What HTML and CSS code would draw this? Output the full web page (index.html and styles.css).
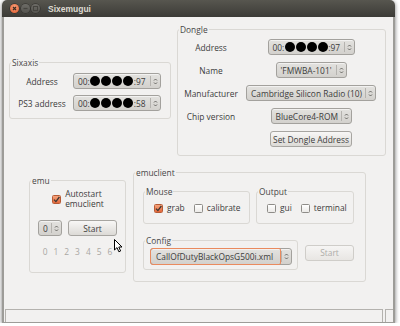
FILE: index.html
```html
<!DOCTYPE html>
<html lang="en">
<head>
    <meta charset="UTF-8">
    <title>Sixemugui</title>
    <link rel="stylesheet" href="styles.css">
</head>
<body>
    <div class="window">
        <div class="titlebar">
            <div class="wm-buttons">
                <span class="wm-btn close">
                    <svg width="9" height="9" viewBox="0 0 9 9"><path d="M3 3 L6 6 M6 3 L3 6" stroke="#3c2b22" stroke-width="1.2"/></svg>
                </span>
                <span class="wm-btn">
                    <svg width="9" height="9" viewBox="0 0 9 9"><path d="M2.5 4.5 H6.5" stroke="#45443f" stroke-width="1.2"/></svg>
                </span>
                <span class="wm-btn">
                    <svg width="9" height="9" viewBox="0 0 9 9"><rect x="2.5" y="2.5" width="4" height="4" fill="none" stroke="#45443f" stroke-width="1"/></svg>
                </span>
            </div>
            <span class="title">Sixemugui</span>
        </div>

        <div class="client">
            <div class="top-row">
                <fieldset class="group sixaxis">
                    <legend>Sixaxis</legend>
                    <div class="form-grid">
                        <label>Address</label>
                        <div class="spin w88">
                            <span class="value">00:<i class="blot"></i><i class="blot"></i><i class="blot"></i><i class="blot"></i>:97</span>
                            <span class="arrows"><svg width="5" height="9" viewBox="0 0 5 9"><path d="M1 3.5 L2.5 2 L4 3.5 M1 5.5 L2.5 7 L4 5.5" fill="none" stroke="#5a5955" stroke-width="0.9"/></svg></span>
                        </div>
                        <label>PS3 address</label>
                        <div class="spin w88">
                            <span class="value">00:<i class="blot"></i><i class="blot"></i><i class="blot"></i><i class="blot"></i>:58</span>
                            <span class="arrows"><svg width="5" height="9" viewBox="0 0 5 9"><path d="M1 3.5 L2.5 2 L4 3.5 M1 5.5 L2.5 7 L4 5.5" fill="none" stroke="#5a5955" stroke-width="0.9"/></svg></span>
                        </div>
                    </div>
                </fieldset>

                <fieldset class="group dongle">
                    <legend>Dongle</legend>
                    <div class="form-grid">
                        <label>Address</label>
                        <div class="spin w87">
                            <span class="value">00:<i class="blot"></i><i class="blot"></i><i class="blot"></i><i class="blot"></i>:97</span>
                            <span class="arrows"><svg width="5" height="9" viewBox="0 0 5 9"><path d="M1 3.5 L2.5 2 L4 3.5 M1 5.5 L2.5 7 L4 5.5" fill="none" stroke="#5a5955" stroke-width="0.9"/></svg></span>
                        </div>
                        <label>Name</label>
                        <div class="spin w71">
                            <span class="value">'FMWBA-101'</span>
                            <span class="arrows"><svg width="5" height="9" viewBox="0 0 5 9"><path d="M1 3.5 L2.5 2 L4 3.5 M1 5.5 L2.5 7 L4 5.5" fill="none" stroke="#5a5955" stroke-width="0.9"/></svg></span>
                        </div>
                        <label>Manufacturer</label>
                        <div class="spin w130">
                            <span class="value">Cambridge Silicon Radio (10)</span>
                            <span class="arrows"><svg width="5" height="9" viewBox="0 0 5 9"><path d="M1 3.5 L2.5 2 L4 3.5 M1 5.5 L2.5 7 L4 5.5" fill="none" stroke="#5a5955" stroke-width="0.9"/></svg></span>
                        </div>
                        <label>Chip version</label>
                        <div class="spin w81">
                            <span class="value">BlueCore4-ROM</span>
                            <span class="arrows"><svg width="5" height="9" viewBox="0 0 5 9"><path d="M1 3.5 L2.5 2 L4 3.5 M1 5.5 L2.5 7 L4 5.5" fill="none" stroke="#5a5955" stroke-width="0.9"/></svg></span>
                        </div>
                        <span></span>
                        <button class="btn w82">Set Dongle Address</button>
                    </div>
                </fieldset>
            </div>

            <div class="bottom-row">
                <fieldset class="group emu">
                    <legend>emu</legend>
                    <div class="emu-body">
                        <div class="check-item">
                            <span class="checkbox checked"><svg width="9" height="9" viewBox="0 0 9 9"><path d="M2 4.6 L3.9 6.6 L7.4 2" fill="none" stroke="#3a3633" stroke-width="1.3"/></svg></span>
                            <span class="two-line">Autostart<br>emuclient</span>
                        </div>
                        <div class="emu-controls">
                            <div class="spin w24">
                                <span class="value">0</span>
                                <span class="arrows"><svg width="5" height="9" viewBox="0 0 5 9"><path d="M1 3.5 L2.5 2 L4 3.5 M1 5.5 L2.5 7 L4 5.5" fill="none" stroke="#5a5955" stroke-width="0.9"/></svg></span>
                            </div>
                            <button class="btn w49">Start</button>
                        </div>
                        <div class="slots">
                            <span>0</span><span>1</span><span>2</span><span>3</span><span>4</span><span>5</span><span>6</span>
                        </div>
                    </div>
                    <svg class="cursor" width="9" height="14" viewBox="0 0 9 14">
                        <path d="M0.5 0.5 L0.5 11 L3 8.6 L4.9 12.8 L6.6 12 L4.8 8 L8 8 Z" fill="#fff" stroke="#000" stroke-width="1"/>
                    </svg>
                </fieldset>

                <fieldset class="group emuclient">
                    <legend>emuclient</legend>
                    <div class="emuclient-body">
                        <div class="io-row">
                            <fieldset class="group mouse">
                                <legend>Mouse</legend>
                                <div class="checks">
                                    <div class="check-item">
                                        <span class="checkbox checked"><svg width="9" height="9" viewBox="0 0 9 9"><path d="M2 4.6 L3.9 6.6 L7.4 2" fill="none" stroke="#3a3633" stroke-width="1.3"/></svg></span>
                                        <span>grab</span>
                                    </div>
                                    <div class="check-item">
                                        <span class="checkbox"></span>
                                        <span>calibrate</span>
                                    </div>
                                </div>
                            </fieldset>
                            <fieldset class="group output">
                                <legend>Output</legend>
                                <div class="checks">
                                    <div class="check-item">
                                        <span class="checkbox"></span>
                                        <span>gui</span>
                                    </div>
                                    <div class="check-item">
                                        <span class="checkbox"></span>
                                        <span>terminal</span>
                                    </div>
                                </div>
                            </fieldset>
                        </div>
                        <div class="config-row">
                            <fieldset class="group config">
                                <legend>Config</legend>
                                <div class="config-body">
                                    <div class="spin focus">
                                        <span class="value">CallOfDutyBlackOpsG500i.xml</span>
                                        <span class="arrows"><svg width="5" height="9" viewBox="0 0 5 9"><path d="M1 3.5 L2.5 2 L4 3.5 M1 5.5 L2.5 7 L4 5.5" fill="none" stroke="#5a5955" stroke-width="0.9"/></svg></span>
                                    </div>
                                </div>
                            </fieldset>
                            <button class="btn w49" disabled>Start</button>
                        </div>
                    </div>
                </fieldset>
            </div>

            <div class="statusbar">
                <div class="status-msg"></div>
                <div class="grip"></div>
            </div>
        </div>
    </div>
</body>
</html>
```

FILE: styles.css
```css
* {
    box-sizing: border-box;
}
body {
    margin: 0;
    background-color: #fff;
    font-family: "Open Sans", "Liberation Sans", Arial, sans-serif;
    font-size: 8.4px;
    color: #3c3c3c;
}
.window {
    width: 393px;
    margin-left: 2px;
    border-radius: 5px 5px 0 0;
    box-shadow: 0 1px 4px rgba(0, 0, 0, 0.55);
}
.titlebar {
    height: 17px;
    display: flex;
    align-items: center;
    padding-left: 8px;
    background: linear-gradient(#57564f, #3c3b37);
    border-radius: 5px 5px 0 0;
}
.wm-buttons {
    display: flex;
    gap: 1.5px;
}
.wm-btn {
    width: 9px;
    height: 9px;
    border-radius: 50%;
    display: flex;
    background: linear-gradient(#6d6c67, #55544f);
    box-shadow: 0 0 0 0.5px #2e2d2a;
}
.wm-btn.close {
    background: radial-gradient(circle at 50% 35%, #f8a07a, #e25a2c);
}
.title {
    margin-left: 8px;
    font-family: "Liberation Sans", Arial, sans-serif;
    font-size: 8.5px;
    font-weight: bold;
    color: #dfdbd2;
}
.client {
    height: 306px;
    display: flex;
    flex-direction: column;
    background-color: #f2f1f0;
    border: solid #9d9c98;
    border-width: 0 2px 1px 2px;
}

/* group boxes */
.group {
    margin: 0;
    padding: 0;
    min-width: 0;
    border: 1px solid #dad8d4;
    border-radius: 3px;
}
.group legend {
    margin-left: 1px;
    padding: 0 1px;
    line-height: 11px;
    color: #474747;
}
.top-row {
    display: flex;
    align-items: flex-start;
    gap: 6px;
    margin-top: 7px;
    padding-left: 5px;
}
.sixaxis {
    width: 162px;
    margin-top: 33px;
}
.dongle {
    width: 209px;
}
.form-grid {
    display: grid;
    grid-auto-rows: 16px;
    align-items: center;
    justify-items: center;
}
.sixaxis .form-grid {
    grid-template-columns: 50px 88px;
    column-gap: 6px;
    row-gap: 6px;
    padding: 5px 0 7px 7px;
}
.dongle .form-grid {
    grid-template-columns: 62px 130px;
    column-gap: 4px;
    row-gap: 7px;
    padding: 4px 0 8px 2px;
}
.form-grid label {
    white-space: nowrap;
}

/* spin boxes and combos */
.spin {
    height: 16px;
    display: flex;
    align-items: stretch;
    border: 1px solid #a3a19d;
    border-radius: 3px;
    background: linear-gradient(#e3e2df, #d3d1cd);
    box-shadow: inset 0 1px 0 rgba(255, 255, 255, 0.55);
    white-space: nowrap;
}
.spin .value {
    flex: 1;
    display: flex;
    align-items: center;
    padding-left: 4px;
    overflow: hidden;
}
.spin .arrows {
    width: 10px;
    flex: none;
    display: flex;
    align-items: center;
    justify-content: center;
    border-left: 1px solid #b5b3af;
    margin: 2px 0;
}
.spin.focus {
    height: 17px;
    width: 142px;
}
.spin.focus .value {
    margin: -1px 0 -1px -1px;
    padding-left: 5px;
    border: 1px solid #ea8a5e;
    border-radius: 3px 2px 2px 3px;
}
.blot {
    width: 10px;
    height: 10px;
    flex: none;
    margin: 0 0.5px;
    border-radius: 50%;
    background-color: #000;
}
.w24 { width: 24px; }
.w49 { width: 49px; }
.w71 { width: 71px; }
.w81 { width: 81px; }
.w82 { width: 82px; }
.w87 { width: 87px; }
.w88 { width: 88px; }
.w130 { width: 130px; }

/* buttons */
.btn {
    height: 16px;
    padding: 0;
    font-family: inherit;
    font-size: 8.4px;
    color: #3c3c3c;
    border: 1px solid #a7a5a1;
    border-radius: 3px;
    background: linear-gradient(#f8f7f6, #dcdad6);
    white-space: nowrap;
}
.btn:disabled {
    color: #aeaca8;
    border-color: #cfcdc9;
    background: linear-gradient(#f6f5f4, #e8e6e3);
}

/* checkboxes */
.check-item {
    display: flex;
    align-items: center;
    gap: 4px;
    line-height: 10px;
}
.checkbox {
    width: 9px;
    height: 9px;
    flex: none;
    display: flex;
    border: 1px solid #8e8c88;
    border-radius: 1.5px;
    background: linear-gradient(#ffffff, #eceae7);
}
.checkbox.checked {
    border-color: #b85a34;
    background: linear-gradient(#f5a47c, #e3683b);
}
.checkbox svg {
    margin: -1px;
}

/* bottom part */
.bottom-row {
    display: flex;
    align-items: flex-start;
    gap: 7px;
    margin-top: 11px;
    padding-left: 25px;
}
.emu {
    position: relative;
    width: 97px;
    margin-top: 8px;
}
.emu-body {
    display: flex;
    flex-direction: column;
    align-items: center;
    padding: 3px 0 15px;
}
.emu-body .check-item {
    margin-left: 1px;
}
.emu-controls {
    display: flex;
    gap: 6px;
    margin-top: 11px;
}
.slots {
    display: flex;
    gap: 6px;
    margin-top: 11px;
    line-height: 10px;
    color: #a9a7a3;
}
.cursor {
    position: absolute;
    left: 84px;
    top: 53px;
}
.emuclient {
    width: 233px;
}
.emuclient-body {
    padding: 8px 0 11px 9px;
}
.io-row {
    display: flex;
    gap: 6px;
}
.mouse {
    width: 107px;
}
.output {
    width: 98px;
}
.checks {
    display: flex;
    gap: 9px;
    padding: 6px 0 10px 10px;
}
.config-row {
    display: flex;
    align-items: center;
    gap: 7px;
    margin-top: 11px;
}
.config {
    width: 155px;
}
.config-body {
    padding: 2px 4px 4px 6px;
}

/* status bar */
.statusbar {
    height: 13px;
    display: flex;
    margin-top: auto;
    padding-left: 1px;
}
.status-msg {
    flex: 1;
    border: 1px solid #b4b2ae;
    border-bottom: none;
}
.grip {
    width: 8px;
    margin-left: 2px;
    border: 1px solid #b4b2ae;
    border-bottom: none;
    border-right: none;
}
```
